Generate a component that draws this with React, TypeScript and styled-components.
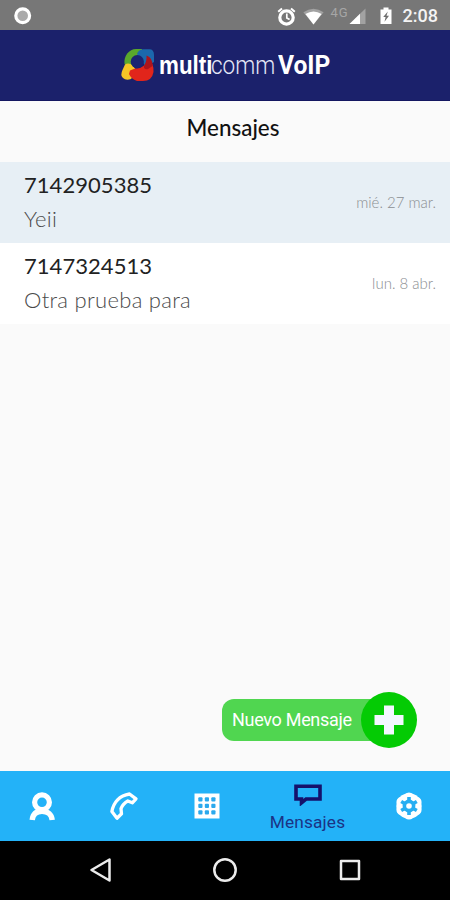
import React from "react";
import styled, { createGlobalStyle } from "styled-components";

const Global = createGlobalStyle`
  * { box-sizing: border-box; }
  html, body { margin: 0; padding: 0; }
  body { background: #fafafa; font-family: Lato, sans-serif; }
  svg { display: block; flex: none; }
`;

const Screen = styled.div`
  width: 450px;
  height: 900px;
  display: flex;
  flex-direction: column;
  overflow: hidden;
  background: #fafafa;
`;

const StatusBar = styled.header`
  height: 30px;
  flex: none;
  display: flex;
  align-items: center;
  justify-content: space-between;
  padding: 2px 12px 0 13px;
  background: #777777;
`;

const StatusIcons = styled.div`
  display: flex;
  align-items: center;
`;

const Network = styled.span`
  width: 17px;
  margin: -7px 1px 0 7px;
  font: 400 13px/14px Roboto, sans-serif;
  letter-spacing: 0.8px;
  color: #a6a6a6;
`;

const Clock = styled.span`
  margin-left: 11px;
  font: 500 18px/22px Roboto, sans-serif;
  color: #f4f4f4;
`;

const Gap = styled.span<{ $w: number }>`
  width: ${(p) => p.$w}px;
`;

const BrandBar = styled.div`
  height: 70.5px;
  flex: none;
  display: flex;
  align-items: center;
  padding-left: 120px;
  background: #1b216b;
  border-bottom: 1px solid #141760;
`;

const BrandName = styled.div`
  display: flex;
  margin-left: 4px;
  font-family: "Liberation Sans", sans-serif;
  font-size: 26px;
  line-height: 30px;
  color: #fff;
  white-space: nowrap;
`;

const BrandPart = styled.span<{ $width: number; $scale: number; $weight: number; $family?: string; $color?: string }>`
  width: ${(p) => p.$width}px;
  transform: scaleX(${(p) => p.$scale});
  transform-origin: left center;
  font-weight: ${(p) => p.$weight};
  font-family: ${(p) => p.$family || "inherit"};
  color: ${(p) => p.$color || "#fff"};
`;

const Title = styled.h1`
  height: 61px;
  flex: none;
  margin: 0;
  padding: 13px 0 0 16px;
  text-align: center;
  font: 500 22.4px/28px Lato, sans-serif;
  color: #111;
`;

const Row = styled.article<{ $unread?: boolean }>`
  height: 81.25px;
  flex: none;
  display: flex;
  align-items: center;
  justify-content: space-between;
  padding: 0 14px 0 24px;
  background: ${(p) => (p.$unread ? "#e7eff5" : "#ffffff")};
`;

const Phone = styled.div`
  margin-top: -1px;
  font-size: 22px;
  line-height: 34px;
  letter-spacing: 0.05px;
  color: #222;
`;

const Preview = styled.div`
  font-weight: 300;
  font-size: 22px;
  line-height: 34px;
  letter-spacing: 0.3px;
  color: #4a4a4a;
`;

const DateLabel = styled.time`
  font-weight: 300;
  font-size: 15px;
  line-height: 20px;
  color: #8b8e92;
`;

const Body = styled.main`
  flex: 1;
  display: flex;
  align-items: flex-end;
  justify-content: flex-end;
  padding: 0 33px 22.5px 0;
`;

const NewMessage = styled.button`
  display: flex;
  align-items: center;
  padding: 0;
  border: 0;
  background: none;
`;

const NewLabel = styled.span`
  width: 167px;
  height: 42px;
  margin-right: -28px;
  padding-left: 10px;
  border-radius: 12px 0 0 12px;
  background: #50d650;
  color: #fff;
  text-align: left;
  font: 400 18px/42px Roboto, sans-serif;
  letter-spacing: -0.3px;
`;

const Plus = styled.span`
  width: 56px;
  height: 56px;
  display: flex;
  align-items: center;
  justify-content: center;
  border-radius: 50%;
  background: #04cb04;
`;

const TabBar = styled.nav`
  height: 70px;
  flex: none;
  display: grid;
  grid-template-columns: 83px 82px 83px 119px 83px;
  background: #23b2f8;
`;

const Tab = styled.div`
  display: flex;
  flex-direction: column;
  align-items: center;
  justify-content: center;
`;

const TabLabel = styled.span`
  margin: 5px 0 -6px;
  font: 400 17.3px/22px Roboto, sans-serif;
  letter-spacing: 0.15px;
  color: #1b3385;
`;

const SystemNav = styled.footer`
  height: 59.5px;
  flex: none;
  display: flex;
  align-items: center;
  justify-content: space-between;
  padding: 0 88px;
  background: #000;
`;

const messages = [
  { phone: "7142905385", text: "Yeii", date: "mié. 27 mar.", unread: true },
  { phone: "7147324513", text: "Otra prueba para", date: "lun. 8 abr.", unread: false },
];

const Logo = () => (
  <svg width="35" height="34" viewBox="0 0 35 34">
    <path d="M4.500 16C3.500 8 9 1 16 1H22L23 9L10 20Z" fill="#5aa82c" />
    <path d="M17 6Q18 2 23 1.200H29Q34 1 34 7V14L26 19Z" fill="#1c68ad" />
    <path d="M5 16.500Q9 14 13 18L17 23L11 31Q6 33 3 30Q0 27 2.500 22Z" fill="#f5c526" />
    <path d="M10 22.500Q14 20 20 20Q27 17 28 10Q34 15 33.500 24Q32 33 23 33H17Q11 31 9 26Z" fill="#e1251b" />
    <path d="M24 18Q27 13 26.500 7.500Q33 10 32.500 18L28 21Q26 22 24 20Z" fill="#ad141c" />
    <circle cx="17.300" cy="13.700" r="6.600" fill="#1b2472" />
  </svg>
);

export default function App() {
  return (
    <>
      <Global />
      <Screen>
        <StatusBar>
          <svg width="20" height="20" viewBox="0 0 20 20">
            <circle cx="9.700" cy="9.700" r="6.900" fill="#aaa" stroke="#fff" strokeWidth="3.200" />
          </svg>
          <StatusIcons>
            <svg width="19" height="19" viewBox="0 0 19 19">
              <circle cx="9.500" cy="10.500" r="6.700" fill="none" stroke="#fff" strokeWidth="3.200" />
              <path d="M9.800 6.400V11l2.800 1.600" fill="none" stroke="#fff" strokeWidth="1.700" />
              <path d="M1.200 4.700L5 1.400M17.800 4.700L14 1.400" stroke="#fff" strokeWidth="2" />
            </svg>
            <Gap $w={7} />
            <svg width="21" height="17" viewBox="0 0 21 17">
              <path d="M.4 4.200Q10.500-2.900 20.600 4.200L10.500 16.500Z" fill="#a2a2a2" />
              <path d="M2.400 6Q10.500 1 18.600 6L10.500 16.500Z" fill="#fff" />
            </svg>
            <Network>4G</Network>
            <svg width="17" height="17" viewBox="0 0 17 17">
              <path d="M.5 16L16.500.5V16Z" fill="#a2a2a2" />
              <path d="M.5 16L11 5.800V16Z" fill="#fff" />
            </svg>
            <Gap $w={14} />
            <svg width="12" height="18" viewBox="0 0 12 18">
              <path d="M.5 2.500H3.500V.5H8.500V2.500H11.500V17H.5Z" fill="#fff" />
              <path d="M7.800 4.500L3.200 10H5.600L4.500 14.800L9 8.800H6.500Z" fill="#707070" />
            </svg>
            <Clock>2:08</Clock>
          </StatusIcons>
        </StatusBar>

        <BrandBar>
          <Logo />
          <BrandName>
            <BrandPart $width={52} $scale={0.86} $weight={700}>multi</BrandPart>
            <BrandPart $width={66.5} $scale={0.865} $weight={300} $family="Roboto" $color="#e6e8f8">comm</BrandPart>
            <BrandPart $width={52} $scale={0.945} $weight={700} $family="Roboto">VoIP</BrandPart>
          </BrandName>
        </BrandBar>

        <Title>Mensajes</Title>
        {messages.map((m) => (
          <Row key={m.phone} $unread={m.unread}>
            <div>
              <Phone>{m.phone}</Phone>
              <Preview>{m.text}</Preview>
            </div>
            <DateLabel>{m.date}</DateLabel>
          </Row>
        ))}

        <Body>
          <NewMessage>
            <NewLabel>Nuevo Mensaje</NewLabel>
            <Plus>
              <svg width="30" height="30" viewBox="0 0 30 30">
                <path d="M10 .5H20V10H29.500V20H20V29.500H10V20H.5V10H10Z" fill="#f3f7ff" />
              </svg>
            </Plus>
          </NewMessage>
        </Body>

        <TabBar>
          <Tab>
            <svg width="28" height="30" viewBox="0 0 28 30">
              <circle cx="14" cy="11.300" r="7.400" fill="none" stroke="#fff" strokeWidth="5.200" />
              <path d="M4.200 29C4.800 23.500 8 20.200 14 20.200S23.600 23.500 24.200 29" fill="none" stroke="#fff" strokeWidth="5.400" />
            </svg>
          </Tab>
          <Tab>
            <svg width="30" height="30" viewBox="0 0 30 30">
              <path d="M20.500 3L27 7.800L23.300 11.800L18.800 10C15.500 11.800 13.400 13.800 12 17.600L12.500 22.800L8 27.200L2.900 20.500C4.500 11.500 10.500 4.600 20.500 3Z" fill="none" stroke="#fff" strokeWidth="3.300" strokeLinejoin="round" />
            </svg>
          </Tab>
          <Tab>
            <svg width="26" height="26" viewBox="0 0 26 26">
              <path d="M.5.5H25.500V25.500H.5Z" fill="#fff" />
              {[4.300, 10.800, 17.300].map((y) =>
                [4.300, 10.800, 17.300].map((x) => (
                  <rect key={`${x}-${y}`} x={x} y={y} width="4.200" height="4.200" rx="1" fill="#2ba9ed" />
                )),
              )}
            </svg>
          </Tab>
          <Tab>
            <svg width="28" height="22" viewBox="0 0 28 22">
              <path d="M2 2.200H26V15H12L7.500 18.800V15H2Z" fill="none" stroke="#15116b" strokeWidth="3.600" />
            </svg>
            <TabLabel>Mensajes</TabLabel>
          </Tab>
          <Tab>
            <svg width="28" height="28" viewBox="0 0 28 28">
              <g fill="#fff">
                <circle cx="14" cy="14" r="12.700" />
                {[0, 60, 120, 180, 240, 300].map((a) => (
                  <circle key={a} cx="14" cy="5.800" r="5.400" transform={`rotate(${a} 14 14)`} />
                ))}
              </g>
              <g fill="#27aef2">
                <circle cx="14" cy="14" r="6.400" />
                {[0, 60, 120].map((a) => (
                  <rect key={a} x="12.200" y="5" width="3.600" height="18" transform={`rotate(${a} 14 14)`} />
                ))}
              </g>
              <circle cx="14" cy="14" r="2.800" fill="#fff" />
            </svg>
          </Tab>
        </TabBar>

        <SystemNav>
          <svg width="24" height="26" viewBox="0 0 24 26">
            <path d="M21.500 2.500V23.500L3.500 13Z" fill="none" stroke="#ececec" strokeWidth="2.500" strokeLinejoin="round" />
          </svg>
          <svg width="26" height="26" viewBox="0 0 26 26">
            <circle cx="13" cy="13" r="10.700" fill="none" stroke="#ececec" strokeWidth="2.500" />
          </svg>
          <svg width="24" height="24" viewBox="0 0 24 24">
            <rect x="3" y="3" width="18" height="18" fill="none" stroke="#ececec" strokeWidth="2.500" strokeLinejoin="round" />
          </svg>
        </SystemNav>
      </Screen>
    </>
  );
}
